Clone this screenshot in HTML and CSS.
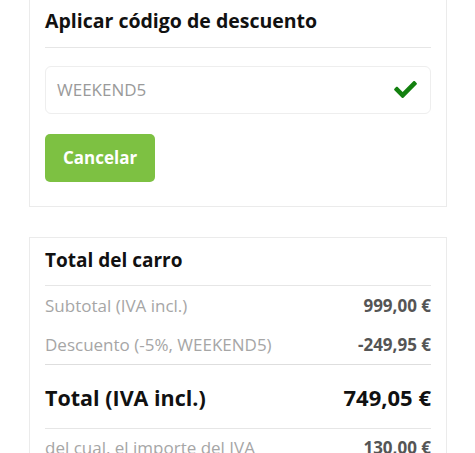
FILE: index.html
```html
<!DOCTYPE html>
<html lang="es">
<head>
    <meta charset="UTF-8">
    <meta name="viewport" content="width=device-width, initial-scale=1.0">
    <title>Carro</title>
    <link rel="stylesheet" href="styles.css">
</head>
<body>
    <div class="page">
        <!-- Cupón -->
        <div class="card">
            <h2 class="card-title title-coupon">Aplicar código de descuento</h2>

            <div class="coupon">
                <span class="coupon-code">WEEKEND5</span>
                <svg class="coupon-ok" viewBox="0 65 512 382" width="23" height="17">
                    <path fill="#13800f" d="M173.898 439.404l-166.4-166.4c-9.997-9.997-9.997-26.206 0-36.204l36.203-36.204c9.997-9.998 26.207-9.998 36.204 0L192 312.69 432.095 72.596c9.997-9.997 26.207-9.997 36.204 0l36.203 36.204c9.997 9.997 9.997 26.206 0 36.204l-294.4 294.401c-9.998 9.997-26.207 9.997-36.204-.001z"/>
                </svg>
            </div>

            <button class="btn">Cancelar</button>
        </div>

        <!-- Totales -->
        <div class="card">
            <h2 class="card-title">Total del carro</h2>

            <div class="row row-first">
                <span class="label">Subtotal (IVA incl.)</span>
                <span class="value">999,00 €</span>
            </div>
            <div class="row row-last">
                <span class="label">Descuento (-5%, WEEKEND5)</span>
                <span class="value">-249,95 €</span>
            </div>
            <div class="row row-total">
                <span class="total-label">Total (IVA incl.)</span>
                <span>749,05 €</span>
            </div>
            <div class="row">
                <span class="label">del cual, el importe del IVA</span>
                <span class="value">130,00 €</span>
            </div>
        </div>
    </div>
</body>
</html>
```

FILE: styles.css
```css
/* Estilo general */
body {
    margin: 0;
    font-family: "Open Sans", Arial, sans-serif;
    background: #fff;
    color: #111;
}

.page {
    margin: -2px 28px 0 29px;
}

.card {
    border: 1px solid #ebebeb;
    padding: 9px 15px 24px;
    margin-bottom: 30px;
}

.card-title {
    margin: 0;
    font-size: 19px;
    font-weight: 700;
    line-height: 26.6px;
    padding-bottom: 12px;
    border-bottom: 1px solid #e6e6e6;
}

.title-coupon {
    font-size: 19.5px;
}

.coupon {
    margin-top: 18px;
    height: 46px;
    border: 1px solid #eeeeee;
    border-radius: 6px;
    display: flex;
    align-items: center;
    justify-content: space-between;
    padding: 0 13px 0 11px;
}

.coupon-code {
    font-size: 17px;
    color: #9a9a9a;
}

.btn {
    margin-top: 20px;
    height: 48px;
    padding: 0 18px;
    border: none;
    border-radius: 5px;
    background: #7dc142;
    color: #fff;
    font-family: inherit;
    font-size: 17px;
    font-weight: 700;
    cursor: pointer;
}

.row {
    display: flex;
    justify-content: space-between;
    padding: 8px 0;
    font-size: 17px;
    line-height: 22.5px;
}

.row-first {
    padding-top: 9px;
}

.row-last {
    border-bottom: 1px solid #dedede;
}

.label {
    color: #a6a6a6;
}

.value {
    color: #555;
    font-weight: 700;
}

.row-total {
    padding: 16px 0 14px;
    font-size: 22px;
    line-height: 33px;
    font-weight: 700;
    color: #111;
    border-bottom: 1px solid #e6e6e6;
}

.total-label {
    font-size: 21.5px;
}
```
